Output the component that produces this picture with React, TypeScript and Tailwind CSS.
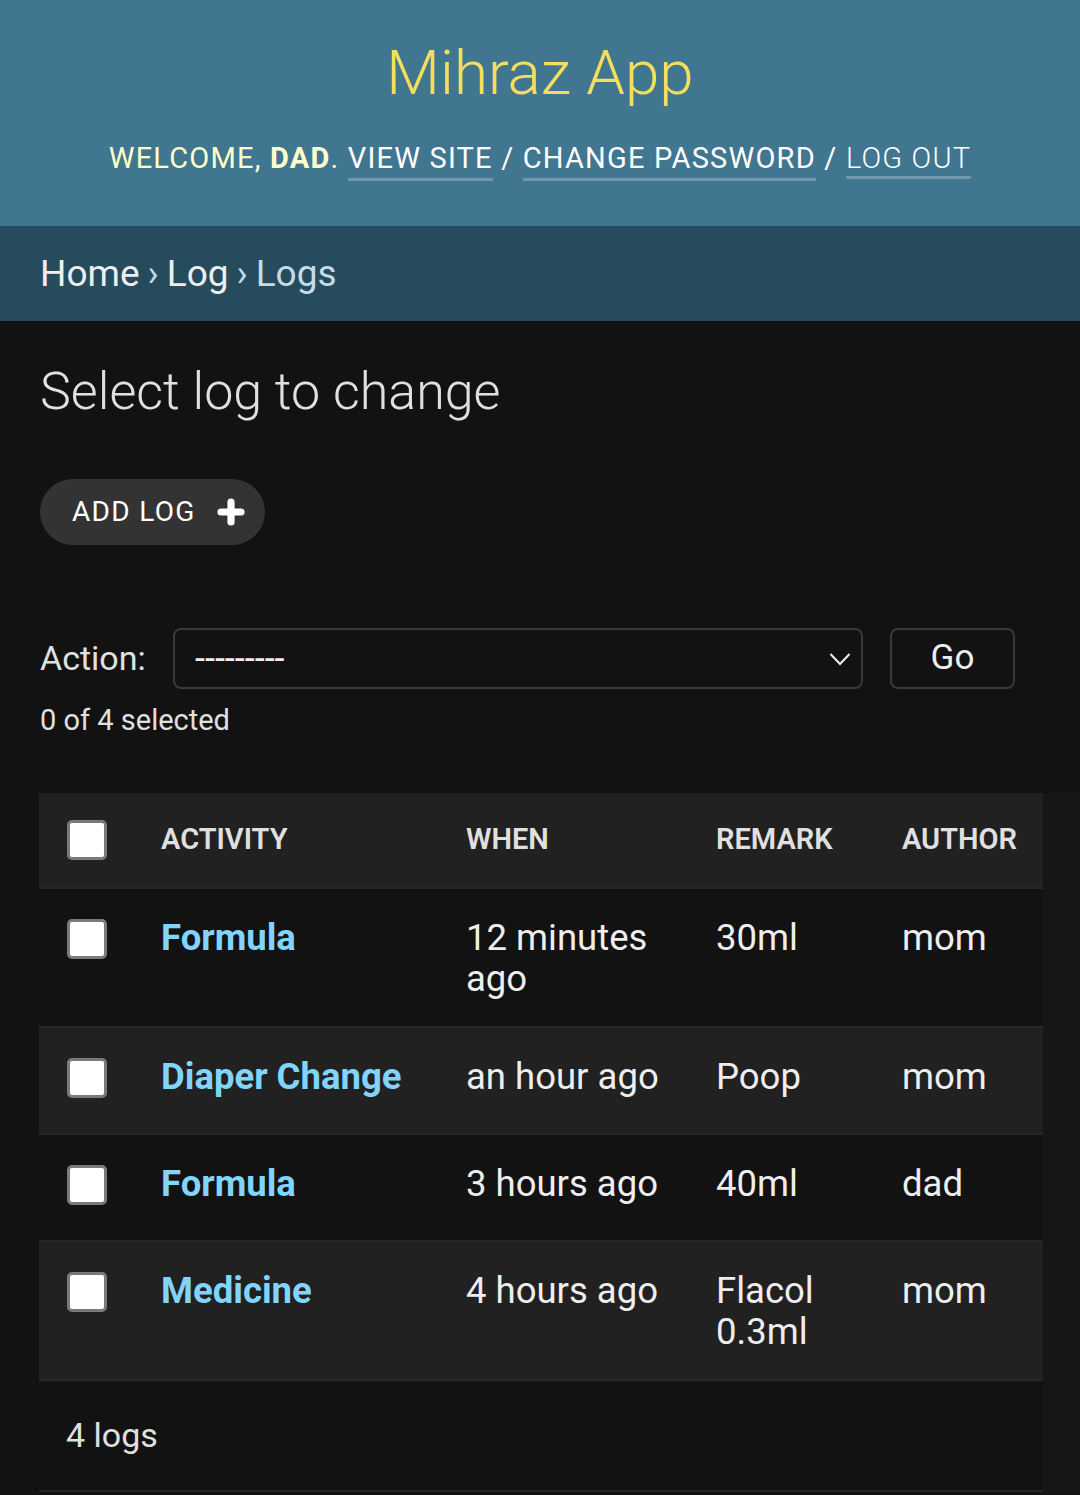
import React from 'react'

const ROWS = [
  { activity: 'Formula', when: '12 minutes ago', remark: '30ml', author: 'mom', bg: 'bg-[#121212]' },
  { activity: 'Diaper Change', when: 'an hour ago', remark: 'Poop', author: 'mom', bg: 'bg-[#212121]' },
  { activity: 'Formula', when: '3 hours ago', remark: '40ml', author: 'dad', bg: 'bg-[#121212]' },
  { activity: 'Medicine', when: '4 hours ago', remark: 'Flacol 0.3ml', author: 'mom', bg: 'bg-[#212121]' },
]

function Checkbox() {
  return <div className="h-[40px] w-[40px] rounded-[5px] border-[3px] border-[#7a7a7a] bg-white" />
}

function PlusIcon() {
  return (
    <svg width="28" height="28" viewBox="0 0 14 14" className="block">
      <path d="M7 2v10M2 7h10" stroke="#fff" strokeWidth="3.6" strokeLinecap="round" fill="none" />
    </svg>
  )
}

function Chevron() {
  return (
    <svg width="22" height="14" viewBox="0 0 22 14" className="block">
      <polyline points="1.5,2 11,12 20.5,2" stroke="#eee" strokeWidth="2" fill="none" />
    </svg>
  )
}

export default function App() {
  return (
    <div className="min-h-[1495px] bg-[#121212] font-['Roboto',sans-serif] text-[#eeeeee]">
      {/* header */}
      <header className="flex h-[226px] flex-col items-center bg-[#417690] pt-[33px]">
        <h1 className="text-[62px] font-light leading-[80px] text-[#f5dd5d]">Mihraz App</h1>
        <div className="mt-[25px] whitespace-nowrap text-[29px] uppercase leading-[40px] tracking-[1.2px] text-white">
          <span className="text-[#ffffcc]">
            Welcome, <strong className="font-bold">dad</strong>.
          </span>{' '}
          <a className="inline-block border-b-[3px] border-[#7098ac]">View site</a> /{' '}
          <a className="inline-block border-b-[3px] border-[#7098ac]">Change password</a> /{' '}
          <span className="inline-block border-b-[3px] border-[#7098ac] font-light leading-[36px]">Log out</span>
        </div>
      </header>

      {/* breadcrumbs */}
      <nav className="flex h-[95px] items-center bg-[#264b5d] px-[40px] text-[37px] text-[#c4dce8]">
        <a className="text-[#eeeeee]">Home</a>
        <span className="mx-[8px]">›</span>
        <a className="text-[#eeeeee]">Log</a>
        <span className="mx-[8px]">›</span>
        <span>Logs</span>
      </nav>

      <main>
        <div className="px-[40px]">
          <h1 className="pt-[39px] text-[52px] font-light leading-[64px] text-[#e0e0e0]">Select log to change</h1>

          <div className="mt-[55px] flex">
            <a className="flex h-[66px] items-center gap-[21px] rounded-full bg-[#333333] pl-[32px] pr-[20px] text-[28px] uppercase tracking-[1.3px] text-white">
              <span>Add log</span>
              <PlusIcon />
            </a>
          </div>

          <div className="mt-[83px] flex items-center">
            <label className="w-[133px] text-[34px] text-[#e0e0e0]">Action:</label>
            <div className="flex h-[61px] w-[690px] items-center justify-between rounded-[8px] border-2 border-[#3a3a3a] pl-[20px] pr-[10px] text-[36px]">
              <span>---------</span>
              <Chevron />
            </div>
            <button className="ml-[27px] flex h-[61px] w-[125px] items-center justify-center rounded-[8px] border-2 border-[#3a3a3a] text-[35px] text-[#eeeeee]">
              Go
            </button>
          </div>

          <p className="mt-[11px] text-[29px] leading-[40px] text-[#e0e0e0]">0 of 4 selected</p>
        </div>

        <div className="mt-[53px] flex">
          <div className="ml-[39px] w-[1004px]">
            <table className="w-full table-fixed border-collapse">
              <colgroup>
                <col className="w-[122px]" />
                <col className="w-[305px]" />
                <col className="w-[250px]" />
                <col className="w-[186px]" />
                <col />
              </colgroup>
              <thead>
                <tr className="h-[95px] border-b-2 border-[#272727] bg-[#212121] text-left text-[29px] font-semibold uppercase text-[#e0e0e0]">
                  <th className="pl-[28px] align-middle">
                    <Checkbox />
                  </th>
                  <th className="align-middle font-semibold">Activity</th>
                  <th className="align-middle font-semibold">When</th>
                  <th className="align-middle font-semibold">Remark</th>
                  <th className="align-middle font-semibold">Author</th>
                </tr>
              </thead>
              <tbody className="text-[36.5px] leading-[41px]">
                {ROWS.map((r, i) => (
                  <tr key={i} className={`${r.bg} border-b-2 border-[#272727] align-top`}>
                    <td className="pb-[35px] pl-[28px] pt-[30px]">
                      <Checkbox />
                    </td>
                    <td className="pb-[27px] pr-[25px] pt-[28px] font-bold text-[#81d4fa]">{r.activity}</td>
                    <td className="pb-[27px] pr-[25px] pt-[28px]">{r.when}</td>
                    <td className="pb-[27px] pr-[25px] pt-[28px]">{r.remark}</td>
                    <td className="pb-[27px] pr-[25px] pt-[28px]">{r.author}</td>
                  </tr>
                ))}
              </tbody>
            </table>

            <div className="flex h-[111px] items-center border-b-2 border-[#272727] pl-[27px] text-[34px] text-[#e0e0e0]">
              4 logs
            </div>
          </div>
          <div className="flex-1 bg-[#161616]" />
        </div>
      </main>
    </div>
  )
}
